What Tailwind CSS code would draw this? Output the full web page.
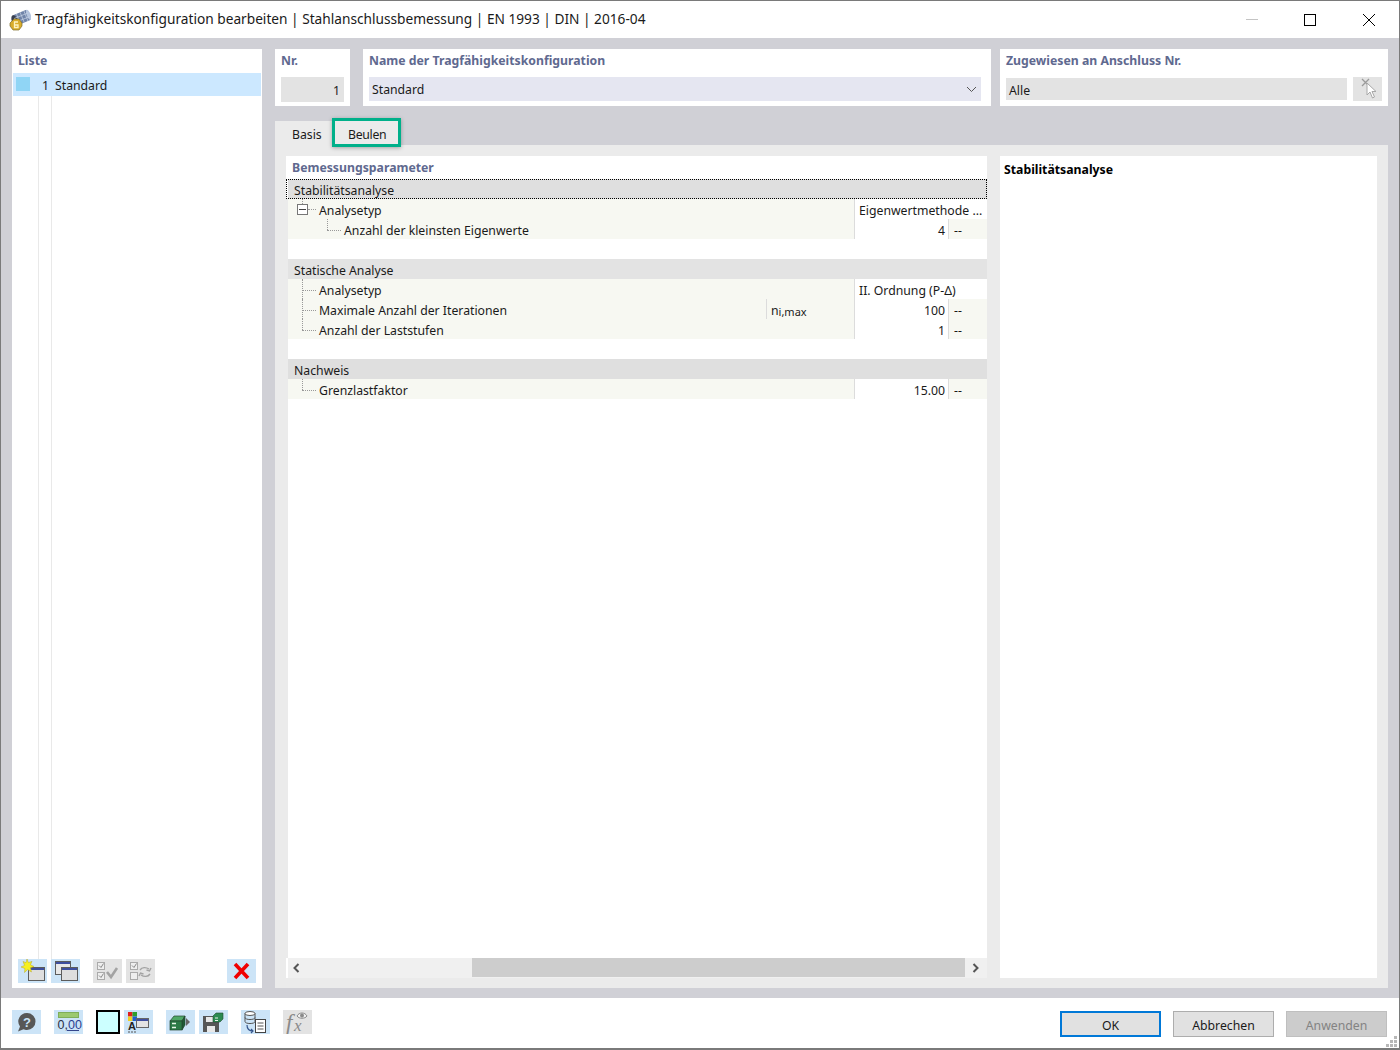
<!DOCTYPE html>
<html lang="de">
<head>
    <meta charset="UTF-8">
    <title>Tragfähigkeitskonfiguration bearbeiten</title>
    <script src="https://cdn.jsdelivr.net/npm/@tailwindcss/browser@4"></script>
</head>
<body class="bg-white">
<div class="w-[1400px] h-[1050px] flex flex-col border border-[#7a7a7a] border-b-2 font-['Noto_Sans',sans-serif] text-[12.25px] leading-[22px] text-[#1a1a1a] overflow-hidden">

    <!-- Title bar -->
    <div class="h-[37px] shrink-0 flex items-center bg-white">
        <svg class="ml-[8px] w-[22px] h-[22px]" viewBox="0 0 22 22">
            <g transform="rotate(-22 13 8)">
                <rect x="5" y="3" width="15" height="11" rx="1" fill="#6f83a8"/>
                <ellipse cx="5" cy="8.500" rx="3" ry="5.500" fill="#39404f"/>
                <ellipse cx="20" cy="8.500" rx="2" ry="5.500" fill="#b4c4de"/>
                <path d="M9 3v11M13 3v11M17 3v11M5 6.500h15M5 10.500h15" stroke="#c3cfe2" stroke-width=".7" fill="none"/>
            </g>
            <path d="M5 10h5l3 4v3l-3 4H4l-3-4v-3z" fill="#d9ac2c" stroke="#7d6a2a" stroke-width=".7"/>
            <path d="M9 13H5.500v5.500H9V16H5.500" fill="none" stroke="#fff3c0" stroke-width="1.300"/>
        </svg>
        <div class="ml-[4px] -mt-[1px] text-[13.7px] text-[#1a1a1a] whitespace-nowrap">Tragfähigkeitskonfiguration bearbeiten | Stahlanschlussbemessung | EN 1993 | DIN | 2016-04</div>
        <div class="ml-auto flex items-center">
            <div class="w-[12px] h-px bg-[#c4c4c4]"></div>
            <div class="ml-[46px] w-[12px] h-[12px] border border-black"></div>
            <svg class="ml-[47px] mr-[24px] w-[12px] h-[12px]" viewBox="0 0 12 12"><path d="M0 0L12 12M12 0L0 12" stroke="#000" stroke-width="1"/></svg>
        </div>
    </div>

    <!-- Main area -->
    <div class="h-[960px] shrink-0 bg-[#d0d0d6] flex pl-[11px] pr-[11px] pt-[11px] pb-[10px] gap-[13px]">

        <!-- Liste -->
        <div class="w-[250px] shrink-0 bg-white flex flex-col">
            <div class="h-[24px] pl-[6px] pt-[1px] font-bold text-[#60698f]">Liste</div>
            <div class="h-[23px] ml-[1px] mr-px pt-[2px] bg-[#cce8ff] flex items-center">
                <div class="ml-[3px] w-[14px] h-[14px] bg-[#90d5f5] -mt-[3px]"></div>
                <div class="w-[19px] text-right">1</div>
                <div class="ml-[6px]">Standard</div>
            </div>
            <div class="flex-1 relative">
                <div class="absolute left-[26px] top-0 bottom-0 w-px bg-[#e9e9e9]"></div>
                <div class="absolute left-[39px] top-0 bottom-0 w-px bg-[#e9e9e9]"></div>
            </div>
            <div class="h-[29px] pb-[5px] flex pl-[6px] shrink-0 bg-white relative">
                <div class="w-[29px] h-[24px] bg-[#cce4f7]">
                    <svg class="w-[29px] h-[24px]" viewBox="0 0 29 24">
                        <rect x="10.500" y="8.500" width="16" height="13" fill="#dedede" stroke="#5c5c5c"/>
                        <rect x="11" y="9" width="15" height="2" fill="#3f4f9f"/>
                        <path d="M9 0l1.400 3.600L14 2.400l-1.600 3.400L16 7.500l-3.600 1.200L13.500 13 9.600 10.600 6.500 13.500l.4-4L3 8l3.600-1.600L5 2.500l3 1.200z" fill="#f7f01f" stroke="#b9a92a" stroke-width=".5"/>
                    </svg>
                </div>
                <div class="ml-[4px] w-[29px] h-[24px] bg-[#cce4f7]">
                    <svg class="w-[29px] h-[24px]" viewBox="0 0 29 24">
                        <rect x="4.500" y="2.500" width="15" height="13" fill="#e8e8e8" stroke="#5c5c5c"/>
                        <rect x="5" y="3" width="14" height="2" fill="#3f4f9f"/>
                        <rect x="10.500" y="8.500" width="16" height="13" fill="#dedede" stroke="#5c5c5c"/>
                        <rect x="11" y="9" width="15" height="2" fill="#3f4f9f"/>
                    </svg>
                </div>
                <div class="ml-[13px] w-[29px] h-[24px] bg-[#e3e3e3]">
                    <svg class="w-[29px] h-[24px]" viewBox="0 0 29 24">
                        <rect x="4.500" y="3.500" width="7" height="7" fill="#eee" stroke="#aaa"/>
                        <rect x="4.500" y="13.500" width="7" height="7" fill="#eee" stroke="#aaa"/>
                        <path d="M6 6.500l2 2 2.500-4M6 16.500l2 2 2.500-4" stroke="#888" stroke-width="1" fill="none"/>
                        <path d="M14 13l4 5 6-9" stroke="#a3a3a3" stroke-width="2.600" fill="none"/>
                    </svg>
                </div>
                <div class="ml-[4px] w-[29px] h-[24px] bg-[#e3e3e3]">
                    <svg class="w-[29px] h-[24px]" viewBox="0 0 29 24">
                        <rect x="4.500" y="3.500" width="7" height="7" fill="#eee" stroke="#aaa"/>
                        <rect x="4.500" y="13.500" width="7" height="7" fill="#eee" stroke="#aaa"/>
                        <path d="M6 6.500l2 2 2.500-4" stroke="#888" stroke-width="1" fill="none"/>
                        <path d="M14 11c2-3 6-3 9-1M25 9l-1.500 3-3-1M24 15c-2 3-6 3-9 1M13 17l1.500-3 3 1" stroke="#a3a3a3" stroke-width="1.400" fill="none"/>
                    </svg>
                </div>
                <div class="ml-auto mr-[6px] w-[29px] h-[24px] bg-[#cce4f7]">
                    <svg class="w-[29px] h-[24px]" viewBox="0 0 29 24"><path d="M8 5l13 14M21 5L8 19" stroke="#f00000" stroke-width="3.600"/></svg>
                </div>
            </div>
        </div>

        <!-- Right side -->
        <div class="flex-1 flex flex-col min-w-0">
            <!-- Header panels -->
            <div class="h-[57px] shrink-0 flex">
                <div class="w-[75px] bg-white px-[6px] flex flex-col">
                    <div class="h-[28px] pt-[1px] font-bold text-[#60698f]">Nr.</div>
                    <div class="h-[25px] bg-[#e3e3e3] text-right pr-[4px] pt-[3px]">1</div>
                </div>
                <div class="ml-[13px] w-[628px] bg-white pl-[6px] pr-[10px] flex flex-col">
                    <div class="h-[28px] pt-[1px] font-bold text-[#60698f]">Name der Tragfähigkeitskonfiguration</div>
                    <div class="h-[24px] bg-[#e5e6f1] flex items-center justify-between pl-[3px] pr-[4px]">
                        <span class="pt-[2px]">Standard</span>
                        <svg class="w-[11px] h-[7px]" viewBox="0 0 11 7"><path d="M1 1l4.500 4.500L10 1" stroke="#555" fill="none"/></svg>
                    </div>
                </div>
                <div class="ml-[9px] w-[388px] bg-white pl-[6px] pr-[6px] flex flex-col">
                    <div class="h-[28px] pt-[1px] font-bold text-[#60698f]">Zugewiesen an Anschluss Nr.</div>
                    <div class="flex gap-[6px]">
                        <div class="mt-px w-[341px] h-[22px] bg-[#e3e3e3] pl-[3px] pt-[2px]">Alle</div>
                        <div class="w-[29px] h-[24px] bg-[#e3e3e3]">
                            <svg class="w-[29px] h-[24px]" viewBox="0 0 29 24">
                                <path d="M9 2l7 7M16 2L9 9" stroke="#9a9a9a" stroke-width="1.300"/>
                                <path d="M14 6l0 12 3-3 2.500 6 2-1-2.500-5.500 4 0z" fill="#fff" stroke="#a8a8a8"/>
                            </svg>
                        </div>
                    </div>
                </div>
            </div>

            <!-- Tabs -->
            <div class="h-[24px] mt-[15px] shrink-0 flex items-end">
                <div class="w-[57px] h-[24px] bg-[#ebebeb] pl-[17px] pt-[3px]">Basis</div>
                <div class="relative w-[68px] h-[24px] bg-[#ebebeb] pl-[16px] pt-[3px] tracking-[-0.3px]">
                    Beulen
                    <div class="absolute left-0 top-[-3px] w-[69px] h-[29px] border-[3px] border-[#00b08a] shadow-[0_1px_4px_rgba(0,0,0,0.3)]"></div>
                </div>
            </div>

            <!-- Tab content -->
            <div class="flex-1 bg-[#ebebeb] flex pl-[11px] pr-[11px] pt-[11px] pb-[10px] gap-[13px] min-h-0">
                <div class="w-[701px] shrink-0 bg-white flex flex-col">
                    <div class="h-[23px] pl-[6px] pt-px font-bold text-[#60698f] shrink-0">Bemessungsparameter</div>
                    <div class="flex-1 ml-[2px] flex flex-col min-h-0 relative leading-[24px]">

                        <!-- Stabilitaetsanalyse -->
                        <div class="relative h-[20px] bg-[#dfdfdf] pl-[6px]">
                            Stabilitätsanalyse
                            <div class="absolute left-[-2px] right-0 top-0 h-[20px] border border-dotted border-black"></div>
                        </div>
                        <div class="flex h-[20px]">
                            <div class="relative w-[566px] bg-[#f7f8f2] pl-[31px]">
                                Analysetyp
                                <div class="absolute left-[14px] top-0 h-[5px] border-l border-dotted border-[#999]"></div>
                                <div class="absolute left-[9px] top-[5px] w-[11px] h-[11px] border border-[#777] bg-white flex items-center justify-center"><div class="w-[7px] h-px bg-[#444]"></div></div>
                                <div class="absolute left-[20px] top-[10px] w-[8px] border-t border-dotted border-[#999]"></div>
                            </div>
                            <div class="w-[133px] border-l border-[#dcdcdc] pl-[4px] whitespace-nowrap">Eigenwertmethode ...</div>
                        </div>
                        <div class="flex h-[20px]">
                            <div class="relative w-[566px] bg-[#f7f8f2] pl-[56px]">
                                Anzahl der kleinsten Eigenwerte
                                <div class="absolute left-[39px] top-0 h-[11px] border-l border-dotted border-[#999]"></div>
                                <div class="absolute left-[39px] top-[11px] w-[14px] border-t border-dotted border-[#999]"></div>
                            </div>
                            <div class="w-[94px] border-l border-[#dcdcdc] text-right pr-[3px]">4</div>
                            <div class="w-[39px] border-l border-[#dcdcdc] bg-[#f7f8f2] pl-[5px]">--</div>
                        </div>
                        <div class="h-[20px]"></div>

                        <!-- Statische Analyse -->
                        <div class="h-[20px] bg-[#e3e3e3] pl-[6px]">Statische Analyse</div>
                        <div class="flex h-[20px]">
                            <div class="relative w-[566px] bg-[#f7f8f2] pl-[31px]">
                                Analysetyp
                                <div class="absolute left-[14px] top-0 h-[20px] border-l border-dotted border-[#999]"></div>
                                <div class="absolute left-[14px] top-[11px] w-[14px] border-t border-dotted border-[#999]"></div>
                            </div>
                            <div class="w-[133px] border-l border-[#dcdcdc] pl-[4px] whitespace-nowrap">II. Ordnung (P-Δ)</div>
                        </div>
                        <div class="flex h-[20px]">
                            <div class="relative w-[478px] bg-[#f7f8f2] pl-[31px]">
                                Maximale Anzahl der Iterationen
                                <div class="absolute left-[14px] top-0 h-[20px] border-l border-dotted border-[#999]"></div>
                                <div class="absolute left-[14px] top-[11px] w-[14px] border-t border-dotted border-[#999]"></div>
                            </div>
                            <div class="w-[88px] bg-[#f7f8f2] border-l border-[#dcdcdc] pl-[4px]">n<span class="text-[11px] relative top-[1px]">i,max</span></div>
                            <div class="w-[94px] border-l border-[#dcdcdc] text-right pr-[3px]">100</div>
                            <div class="w-[39px] border-l border-[#dcdcdc] bg-[#f7f8f2] pl-[5px]">--</div>
                        </div>
                        <div class="flex h-[20px]">
                            <div class="relative w-[566px] bg-[#f7f8f2] pl-[31px]">
                                Anzahl der Laststufen
                                <div class="absolute left-[14px] top-0 h-[11px] border-l border-dotted border-[#999]"></div>
                                <div class="absolute left-[14px] top-[11px] w-[14px] border-t border-dotted border-[#999]"></div>
                            </div>
                            <div class="w-[94px] border-l border-[#dcdcdc] text-right pr-[3px]">1</div>
                            <div class="w-[39px] border-l border-[#dcdcdc] bg-[#f7f8f2] pl-[5px]">--</div>
                        </div>
                        <div class="h-[20px]"></div>

                        <!-- Nachweis -->
                        <div class="h-[20px] bg-[#dfdfdf] pl-[6px]">Nachweis</div>
                        <div class="flex h-[20px]">
                            <div class="relative w-[566px] bg-[#f7f8f2] pl-[31px]">
                                Grenzlastfaktor
                                <div class="absolute left-[14px] top-0 h-[11px] border-l border-dotted border-[#999]"></div>
                                <div class="absolute left-[14px] top-[11px] w-[14px] border-t border-dotted border-[#999]"></div>
                            </div>
                            <div class="w-[94px] border-l border-[#dcdcdc] text-right pr-[3px]">15.00</div>
                            <div class="w-[39px] border-l border-[#dcdcdc] bg-[#f7f8f2] pl-[5px]">--</div>
                        </div>
                        <div class="flex-1"></div>

                        <!-- Scrollbar -->
                        <div class="h-[20px] shrink-0 bg-[#f0f0f0] flex items-center">
                            <svg class="ml-[4px] w-[8px] h-[10px]" viewBox="0 0 8 10"><path d="M6.500 1L2.500 5l4 4" stroke="#555" stroke-width="2" fill="none"/></svg>
                            <div class="ml-[172px] w-[493px] h-[19px] self-start bg-[#cdcdcd]"></div>
                            <svg class="ml-[7px] w-[8px] h-[10px]" viewBox="0 0 8 10"><path d="M1.500 1l4 4-4 4" stroke="#555" stroke-width="2" fill="none"/></svg>
                        </div>
                        <div class="absolute left-[-2px] top-[20px] bottom-[20px] w-[2px] bg-[#ebebeb]"></div>
                    </div>
                </div>

                <!-- Info panel -->
                <div class="flex-1 bg-white pl-[4px] pt-[3px] font-bold text-black">Stabilitätsanalyse</div>
            </div>
        </div>
    </div>

    <!-- Bottom bar -->
    <div class="relative flex-1 bg-white flex items-start pl-[11px] pt-[12px]">
        <div class="w-[29px] h-[24px] bg-[#cce4f7]">
            <svg class="w-[29px] h-[24px]" viewBox="0 0 29 24">
                <path d="M15 3a8.500 8.500 0 0 1 0 17c-1.500 0-2.500-.3-3.500-.8L6 21.500l2-5A8.500 8.500 0 0 1 15 3z" fill="#575757"/>
                <text x="15" y="16.500" text-anchor="middle" font-family="Liberation Sans" font-weight="bold" font-size="13" fill="#cce4f7">?</text>
            </svg>
        </div>
        <div class="ml-[13px] w-[29px] h-[24px] bg-[#cce4f7] relative overflow-hidden">
            <div class="mx-[4px] mt-[2px] h-[6px] bg-[#9cc96f] border border-[#7fae5a]"></div>
            <div class="absolute left-[3.500px] top-[9px] text-[12.500px] leading-[12px] font-['Liberation_Sans'] text-[#2b2f45]">0,<span class="text-[#2a3f8f]">00</span></div>
            <div class="absolute left-[13px] top-[20px] w-[12px] h-px bg-[#34458c]"></div>
        </div>
        <div class="ml-[13px] w-[24px] h-[24px] bg-[#ccffff] border-2 border-black"></div>
        <div class="ml-[4px] w-[29px] h-[24px] bg-[#cce4f7] relative">
            <svg class="absolute inset-0 w-[29px] h-[24px]" viewBox="0 0 29 24">
                <rect x="4" y="2" width="4.500" height="4.500" fill="#e02020"/>
                <rect x="8.500" y="2" width="4.500" height="4.500" fill="#2f9e2f"/>
                <rect x="4" y="6.500" width="4.500" height="4.500" fill="#f0d020"/>
                <rect x="8.500" y="6.500" width="4.500" height="4.500" fill="#2060d0"/>
                <rect x="12.500" y="8.500" width="12" height="9" fill="#e4e4e4" stroke="#666"/>
                <rect x="13" y="9" width="11" height="2" fill="#3f4f9f"/>
                <text x="4" y="20" font-family="Liberation Sans" font-weight="bold" font-size="11" fill="#222">A</text>
                <path d="M4 22h2M7 22h2M10 22h2" stroke="#555"/>
            </svg>
        </div>
        <div class="ml-[13px] w-[29px] h-[24px] bg-[#cce4f7]">
            <svg class="w-[29px] h-[24px]" viewBox="0 0 29 24">
                <path d="M4 11l4-5h11l-3 5z" fill="#4fa867" stroke="#23452f" stroke-width=".7"/>
                <path d="M16 11l3-5v9l-3 5z" fill="#1f5c36" stroke="#23452f" stroke-width=".7"/>
                <rect x="4" y="11" width="12" height="9" fill="#2c7a46" stroke="#23452f" stroke-width=".7"/>
                <path d="M6 13.500h4M6 17.500h4" stroke="#e8f5e8" stroke-width="1.500"/>
                <path d="M20 8l4 4-4 4z" fill="#666"/>
            </svg>
        </div>
        <div class="ml-[4px] w-[29px] h-[24px] bg-[#cce4f7]">
            <svg class="w-[29px] h-[24px]" viewBox="0 0 29 24">
                <path d="M4 6h13l3 3v13H4z" fill="#565656"/>
                <rect x="7" y="7" width="8" height="5" fill="#e8e8e8"/>
                <rect x="8" y="16" width="8" height="6" fill="#e8e8e8"/>
                <path d="M14 6l3-3h7v6l-3 3h-7z" fill="#2c8a50" stroke="#234a30" stroke-width=".6"/>
                <path d="M16 8h3M16 10.500h3" stroke="#e8f5e8" stroke-width="1"/>
            </svg>
        </div>
        <div class="ml-[13px] w-[29px] h-[24px] bg-[#cce4f7]">
            <svg class="w-[29px] h-[24px]" viewBox="0 0 29 24">
                <ellipse cx="9" cy="3.500" rx="5" ry="2" fill="#fff" stroke="#555"/>
                <path d="M4 3.500v8c0 2.700 10 2.700 10 0v-8M4 7.500c0 2.700 10 2.700 10 0" fill="none" stroke="#555"/>
                <rect x="14.500" y="9.500" width="10" height="13" fill="#fff" stroke="#444"/>
                <path d="M16.500 13h6M16.500 16h6M16.500 19h6" stroke="#555"/>
                <path d="M6 15c0 4 2 6 6 6M10 19l2 2-2 2" stroke="#34558c" stroke-width="1.200" fill="none"/>
            </svg>
        </div>
        <div class="ml-[13px] w-[29px] h-[24px] bg-[#e3e3e3]">
            <svg class="w-[29px] h-[24px]" viewBox="0 0 29 24">
                <text x="3" y="20" font-family="Liberation Serif" font-style="italic" font-size="23" fill="#8a8a8a">f</text>
                <text x="11" y="21" font-family="Liberation Serif" font-style="italic" font-size="17" fill="#8a8a8a">x</text>
                <path d="M14 6c2-4 8-4 10 0-2 3-8 3-10 0z" fill="#f2f2f2" stroke="#8a8a8a"/>
                <circle cx="19" cy="5.500" r="2" fill="#8a8a8a"/>
            </svg>
        </div>

        <div class="ml-auto mr-[12px] flex gap-[12px] mt-px">
            <div class="w-[101px] h-[26px] bg-[#e1e1e1] border-2 border-[#0078d7] flex items-center justify-center pt-[3px]">OK</div>
            <div class="w-[101px] h-[26px] bg-[#e1e1e1] border border-[#adadad] flex items-center justify-center pt-[3px]">Abbrechen</div>
            <div class="w-[101px] h-[26px] bg-[#cccccc] border border-[#bfbfbf] text-[#838383] flex items-center justify-center pt-[3px]">Anwenden</div>
        </div>
        <svg class="absolute right-[1px] bottom-0 w-[12px] h-[12px]" viewBox="0 0 12 12">
            <path d="M8 0h3v3H8zM4 4h3v3H4zM8 4h3v3H8zM0 8h3v3H0zM4 8h3v3H4zM8 8h3v3H8z" fill="#b8b8b8"/>
        </svg>
    </div>
</div>
</body>
</html>
